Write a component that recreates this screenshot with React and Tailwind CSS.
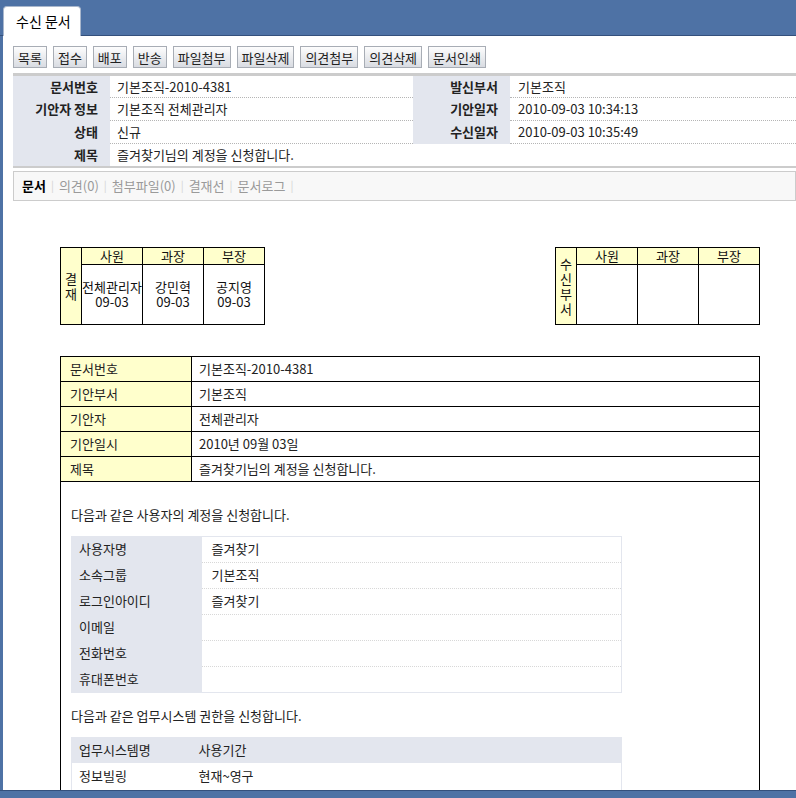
import React from "react";

const toolButtons = ["목록", "접수", "배포", "반송", "파일첨부", "파일삭제", "의견첨부", "의견삭제", "문서인쇄"];

const docTabs = ["문서", "의견(0)", "첨부파일(0)", "결재선", "문서로그"];

const docRows = [
    ["문서번호", "기본조직-2010-4381"],
    ["기안부서", "기본조직"],
    ["기안자", "전체관리자"],
    ["기안일시", "2010년 09월 03일"],
    ["제목", "즐겨찾기님의 계정을 신청합니다."],
];

const userRows = [
    ["사용자명", "즐겨찾기"],
    ["소속그룹", "기본조직"],
    ["로그인아이디", "즐겨찾기"],
    ["이메일", ""],
    ["전화번호", ""],
    ["휴대폰번호", ""],
];

const ToolButton = ({ label }) => (
    <button className="h-[22px] px-[4px] border border-[#a8adb5] bg-gradient-to-b from-[#fdfdfd] to-[#d9dce2] text-[13px] leading-none text-[#222]">
        {label}
    </button>
);

const ApprovalBox = ({ side, cols, cells }) => (
    <table className="border-collapse text-[13px] leading-[15px] text-[#111]">
        <tbody>
            <tr className="h-[17px]">
                <td rowSpan={2} className="w-[21px] border border-black bg-[#ffffcc] text-center align-middle p-0">
                    {side.split("").map((ch, i) => (
                        <div key={i}>{ch}</div>
                    ))}
                </td>
                {cols.map((c) => (
                    <td key={c} className="w-[61px] border border-black bg-[#ffffcc] text-center p-0">
                        {c}
                    </td>
                ))}
            </tr>
            <tr className="h-[60px]">
                {cols.map((c, i) => (
                    <td key={c} className="border border-black text-center align-middle p-0">
                        {cells[i] && (
                            <>
                                <div>{cells[i][0]}</div>
                                <div>{cells[i][1]}</div>
                            </>
                        )}
                    </td>
                ))}
            </tr>
        </tbody>
    </table>
);

const App = () => {
    return (
        <div className="h-[798px] w-[796px] overflow-hidden bg-[#4e72a5] flex flex-col font-['Noto_Sans_CJK_KR','Noto_Sans',sans-serif] text-[#222]">
            {/* window title bar with the active tab */}
            <div className="h-[36px] shrink-0 flex items-end pl-[3px] border-b border-[#34507c]">
                <div className="relative -mb-px h-[30px] w-[78px] rounded-t-[4px] border border-b-0 border-[#a9b7cc] bg-white flex items-center pl-[12px] text-[14px] text-black">
                    수신 문서
                </div>
            </div>

            <div className="flex-1 ml-[3px] bg-white overflow-hidden pl-[10px]">
                {/* toolbar */}
                <div className="flex gap-[6px] mt-[10px]">
                    {toolButtons.map((b) => (
                        <ToolButton key={b} label={b} />
                    ))}
                </div>

                {/* document summary */}
                <table className="mt-[5px] w-full border-collapse border-t-[3px] border-b-2 border-[#cccccc] text-[13px] leading-[14px] table-fixed">
                    <colgroup>
                        <col className="w-[97px]" />
                        <col className="w-[303px]" />
                        <col className="w-[97px]" />
                        <col />
                    </colgroup>
                    <tbody>
                        <tr className="h-[23px]">
                            <th className="bg-[#e3e6ee] text-right pr-[12px] font-bold">문서번호</th>
                            <td className="pl-[7px] border-b border-dotted border-[#b5b5b5]">기본조직-2010-4381</td>
                            <th className="bg-[#e3e6ee] text-right pr-[12px] font-bold">발신부서</th>
                            <td className="pl-[8px] border-b border-dotted border-[#b5b5b5]">기본조직</td>
                        </tr>
                        <tr className="h-[23px]">
                            <th className="bg-[#e3e6ee] text-right pr-[12px] font-bold">기안자 정보</th>
                            <td className="pl-[7px] border-b border-dotted border-[#b5b5b5]">기본조직 전체관리자</td>
                            <th className="bg-[#e3e6ee] text-right pr-[12px] font-bold">기안일자</th>
                            <td className="pl-[8px] border-b border-dotted border-[#b5b5b5]">2010-09-03 10:34:13</td>
                        </tr>
                        <tr className="h-[23px]">
                            <th className="bg-[#e3e6ee] text-right pr-[12px] font-bold">상태</th>
                            <td className="pl-[7px] border-b border-dotted border-[#b5b5b5]">신규</td>
                            <th className="bg-[#e3e6ee] text-right pr-[12px] font-bold">수신일자</th>
                            <td className="pl-[8px] border-b border-dotted border-[#b5b5b5]">2010-09-03 10:35:49</td>
                        </tr>
                        <tr className="h-[23px]">
                            <th className="bg-[#e3e6ee] text-right pr-[12px] font-bold">제목</th>
                            <td colSpan={3} className="pl-[7px]">즐겨찾기님의 계정을 신청합니다.</td>
                        </tr>
                    </tbody>
                </table>

                {/* document tabs */}
                <div className="mt-[3px] h-[30px] border border-[#cccccc] bg-[#f8f8f8] flex items-center pl-[8px] text-[13px]">
                    {docTabs.map((t, i) => (
                        <React.Fragment key={t}>
                            <span className={i === 0 ? "font-bold text-black" : "text-[#9a9a9a]"}>{t}</span>
                            <span className="mx-[5px] text-[#d4d4d4] text-[11px]">|</span>
                        </React.Fragment>
                    ))}
                </div>

                {/* document body */}
                <div className="ml-[47px] w-[700px]">
                    <div className="mt-[46px] flex justify-between">
                        <ApprovalBox
                            side="결재"
                            cols={["사원", "과장", "부장"]}
                            cells={[["전체관리자", "09-03"], ["강민혁", "09-03"], ["공지영", "09-03"]]}
                        />
                        <ApprovalBox side="수신부서" cols={["사원", "과장", "부장"]} cells={[]} />
                    </div>

                    <table className="mt-[31px] w-full border-collapse text-[13px] leading-[14px] table-fixed">
                        <colgroup>
                            <col className="w-[131px]" />
                            <col />
                        </colgroup>
                        <tbody>
                            {docRows.map(([k, v]) => (
                                <tr key={k} className="h-[25px]">
                                    <td className="border border-black bg-[#ffffcc] pl-[9px]">{k}</td>
                                    <td className="border border-black pl-[7px]">{v}</td>
                                </tr>
                            ))}
                            <tr>
                                <td colSpan={2} className="border border-black px-[10px] pt-[26px] align-top">
                                    <p>다음과 같은 사용자의 계정을 신청합니다.</p>
                                    <table className="mt-[14px] w-[551px] border-collapse border border-[#e3e6ee] table-fixed">
                                        <colgroup>
                                            <col className="w-[130px]" />
                                            <col />
                                        </colgroup>
                                        <tbody>
                                            {userRows.map(([k, v], i) => (
                                                <tr key={k} className="h-[26px]">
                                                    <td className="bg-[#e3e6ee] pl-[7px]">{k}</td>
                                                    <td
                                                        className={
                                                            i < userRows.length - 1
                                                                ? "pl-[10px] border-b border-dotted border-[#d8d8d8]"
                                                                : "pl-[10px]"
                                                        }
                                                    >
                                                        {v}
                                                    </td>
                                                </tr>
                                            ))}
                                        </tbody>
                                    </table>

                                    <p className="mt-[16px]">다음과 같은 업무시스템 권한을 신청합니다.</p>
                                    <table className="mt-[14px] w-[551px] border-collapse border border-[#e3e6ee] table-fixed">
                                        <colgroup>
                                            <col className="w-[120px]" />
                                            <col />
                                        </colgroup>
                                        <tbody>
                                            <tr className="h-[26px] bg-[#e3e6ee]">
                                                <td className="pl-[7px]">업무시스템명</td>
                                                <td className="pl-[7px]">사용기간</td>
                                            </tr>
                                            <tr className="h-[26px]">
                                                <td className="pl-[7px]">정보빌링</td>
                                                <td className="pl-[7px]">현재~영구</td>
                                            </tr>
                                            <tr className="h-[26px]">
                                                <td className="pl-[7px]">&nbsp;</td>
                                                <td className="pl-[7px]"></td>
                                            </tr>
                                        </tbody>
                                    </table>
                                </td>
                            </tr>
                        </tbody>
                    </table>
                </div>
            </div>

            <div className="h-[8px] shrink-0 border-t border-[#34507c]"></div>
        </div>
    );
};

export default App;
